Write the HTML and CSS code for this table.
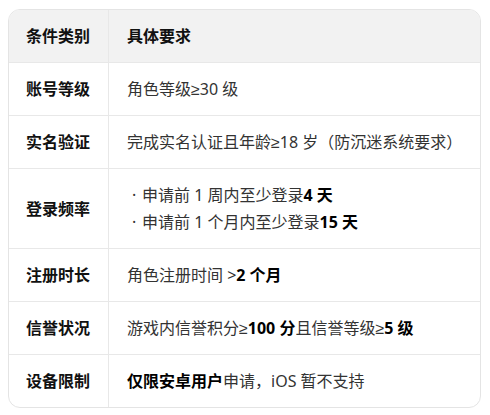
FILE: index.html
```html
<!DOCTYPE html>
<html lang="zh-CN">
<head>
<meta charset="utf-8">
<link rel="stylesheet" href="styles.css">
</head>
<body>
<div class="table">
  <div class="cell head key">条件类别</div>
  <div class="cell head val">具体要求</div>

  <div class="cell key">账号等级</div>
  <div class="cell val">角色等级≥30 级</div>

  <div class="cell key">实名验证</div>
  <div class="cell val">完成实名认证且年龄≥18 岁（防沉迷系统要求）</div>

  <div class="cell key">登录频率</div>
  <div class="cell val">
    <ul class="list">
      <li>申请前 1 周内至少登录<b>4 天</b></li>
      <li>申请前 1 个月内至少登录<b>15 天</b></li>
    </ul>
  </div>

  <div class="cell key">注册时长</div>
  <div class="cell val">角色注册时间 &gt;<b>2 个月</b></div>

  <div class="cell key">信誉状况</div>
  <div class="cell val">游戏内信誉积分≥<b>100 分</b>且信誉等级≥<b>5 级</b></div>

  <div class="cell key last">设备限制</div>
  <div class="cell val last"><b>仅限安卓用户</b>申请，iOS 暂不支持</div>
</div>
</body>
</html>
```

FILE: styles.css
```css
* { box-sizing: border-box; }
html, body { background: #ffffff; }
body {
  margin: 9px 9px 0 8px;
  font-family: "Noto Sans", "Liberation Sans", "Noto Sans CJK SC", sans-serif;
  font-size: 16px;
  color: #333333;
}
.table {
  display: grid;
  grid-template-columns: 100px 1fr;
  border: 1px solid #e4e4e4;
  border-radius: 12px;
  overflow: hidden;
}
.cell {
  padding: 15px 14px 15px 17px;
  line-height: 22px;
  border-bottom: 1px solid #e8e8e8;
  display: flex;
  align-items: center;
}
.cell.last { border-bottom: none; }
.key {
  border-right: 1px solid #e8e8e8;
  font-weight: 700;
  color: #111111;
}
.val { padding-left: 18px; }
.head {
  background: #f2f2f2;
  font-weight: 700;
  color: #111111;
}
b { font-weight: 700; color: #000000; }
.list {
  list-style: none;
  margin: 0;
  padding: 0;
  display: flex;
  flex-direction: column;
  gap: 5px;
}
.list li { display: flex; }
.list li::before {
  content: "·";
  width: 10px;
  margin-left: 5px;
  flex: none;
}
```
